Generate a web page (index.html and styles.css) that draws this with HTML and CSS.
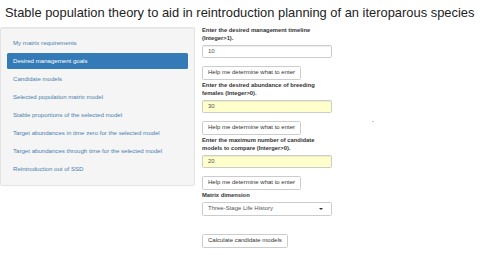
FILE: index.html
```html
<!DOCTYPE html>
<html>
<head>
<meta charset="utf-8">
<link rel="stylesheet" href="styles.css">
</head>
<body>
<h2 class="title">Stable population theory to aid in reintroduction planning of an iteroparous species</h2>
<div class="row">
  <div class="well">
    <ul class="nav">
      <li><a class="pill">My matrix requirements</a></li>
      <li><a class="pill active">Desired management goals</a></li>
      <li><a class="pill">Candidate models</a></li>
      <li><a class="pill">Selected population matrix model</a></li>
      <li><a class="pill">Stable proportions of the selected model</a></li>
      <li><a class="pill">Target abundances in time zero for the selected model</a></li>
      <li><a class="pill">Target abundances through time for the selected model</a></li>
      <li><a class="pill">Reintroduction out of SSD</a></li>
    </ul>
  </div>
  <div class="main">
    <label class="lbl">Enter the desired management timeline (Integer&gt;1).</label>
    <div class="input">10</div>
    <button class="btn">Help me determine what to enter</button>
    <label class="lbl">Enter the desired abundance of breeding females (Integer&gt;0).</label>
    <div class="input warn">30</div>
    <button class="btn">Help me determine what to enter</button>
    <label class="lbl">Enter the maximum number of candidate models to compare (Interger&gt;0).</label>
    <div class="input warn">20</div>
    <button class="btn">Help me determine what to enter</button>
    <label class="lbl">Matrix dimension</label>
    <div class="input select"><span>Three-Stage Life History</span><span class="caret"></span></div>
    <button class="btn calc">Calculate candidate models</button>
  </div>
</div>
<div class="dot"></div>
</body>
</html>
```
FILE: styles.css
```css
html, body {
  margin: 0;
  padding: 0;
  background: #fff;
  font-family: "Liberation Sans", Arial, sans-serif;
  color: #333;
}
.title {
  margin: 6px 0 0 5px;
  font-size: 12.9px;
  line-height: 14px;
  font-weight: normal;
  color: #222;
  white-space: nowrap;
}
.row {
  display: flex;
  align-items: flex-start;
  margin-top: 5px;
}
.well {
  box-sizing: border-box;
  width: 195px;
  height: 159px;
  margin-top: 2px;
  background: #f5f5f5;
  border: 1px solid #e3e3e3;
  border-radius: 1.6px;
  box-shadow: inset 0 1px 1px rgba(0,0,0,.05);
  padding: 7px 6px 0 6px;
}
.nav {
  list-style: none;
  margin: 0;
  padding: 0;
  display: flex;
  flex-direction: column;
  gap: 2px;
}
.pill {
  display: block;
  height: 16px;
  line-height: 16px;
  padding: 0 6px;
  font-size: 6.1px;
  color: #4a7fb0;
  border-radius: 1.6px;
  white-space: nowrap;
}
.pill.active {
  background: #337ab7;
  color: #fff;
}
.main {
  display: flex;
  flex-direction: column;
  align-items: flex-start;
  margin-left: 7px;
  width: 135px;
  padding-top: 0.5px;
}
.lbl {
  display: block;
  font-size: 5.8px;
  line-height: 8px;
  font-weight: bold;
  color: #333;
  margin-bottom: 3px;
  width: 130px;
}
.input {
  box-sizing: border-box;
  width: 130px;
  height: 13.6px;
  border: 1px solid #ccc;
  border-radius: 1.6px;
  background: #fff;
  font-size: 6px;
  line-height: 11.6px;
  padding: 0 5px;
  color: #555;
  margin-bottom: 8px;
  box-shadow: inset 0 1px 1px rgba(0,0,0,.075);
}
.input.warn {
  background: #ffffcc;
}
.input.select {
  display: flex;
  justify-content: space-between;
  align-items: center;
  padding: 0 8px 0 5px;
  box-shadow: none;
  margin-bottom: 18.8px;
}
.caret {
  width: 0;
  height: 0;
  border-left: 2px solid transparent;
  border-right: 2px solid transparent;
  border-top: 2.2px solid #333;
}
.btn {
  box-sizing: border-box;
  height: 13.6px;
  padding: 0 5px;
  font-family: "Liberation Sans", Arial, sans-serif;
  font-size: 6px;
  line-height: 11.6px;
  color: #333;
  background: #fff;
  border: 1px solid #ccc;
  border-radius: 1.6px;
  margin: 0 0 1px 0;
  white-space: nowrap;
}
.dot {
  position: absolute;
  left: 372px;
  top: 121px;
  width: 2px;
  height: 1px;
  background: #c8c8c8;
}
```
